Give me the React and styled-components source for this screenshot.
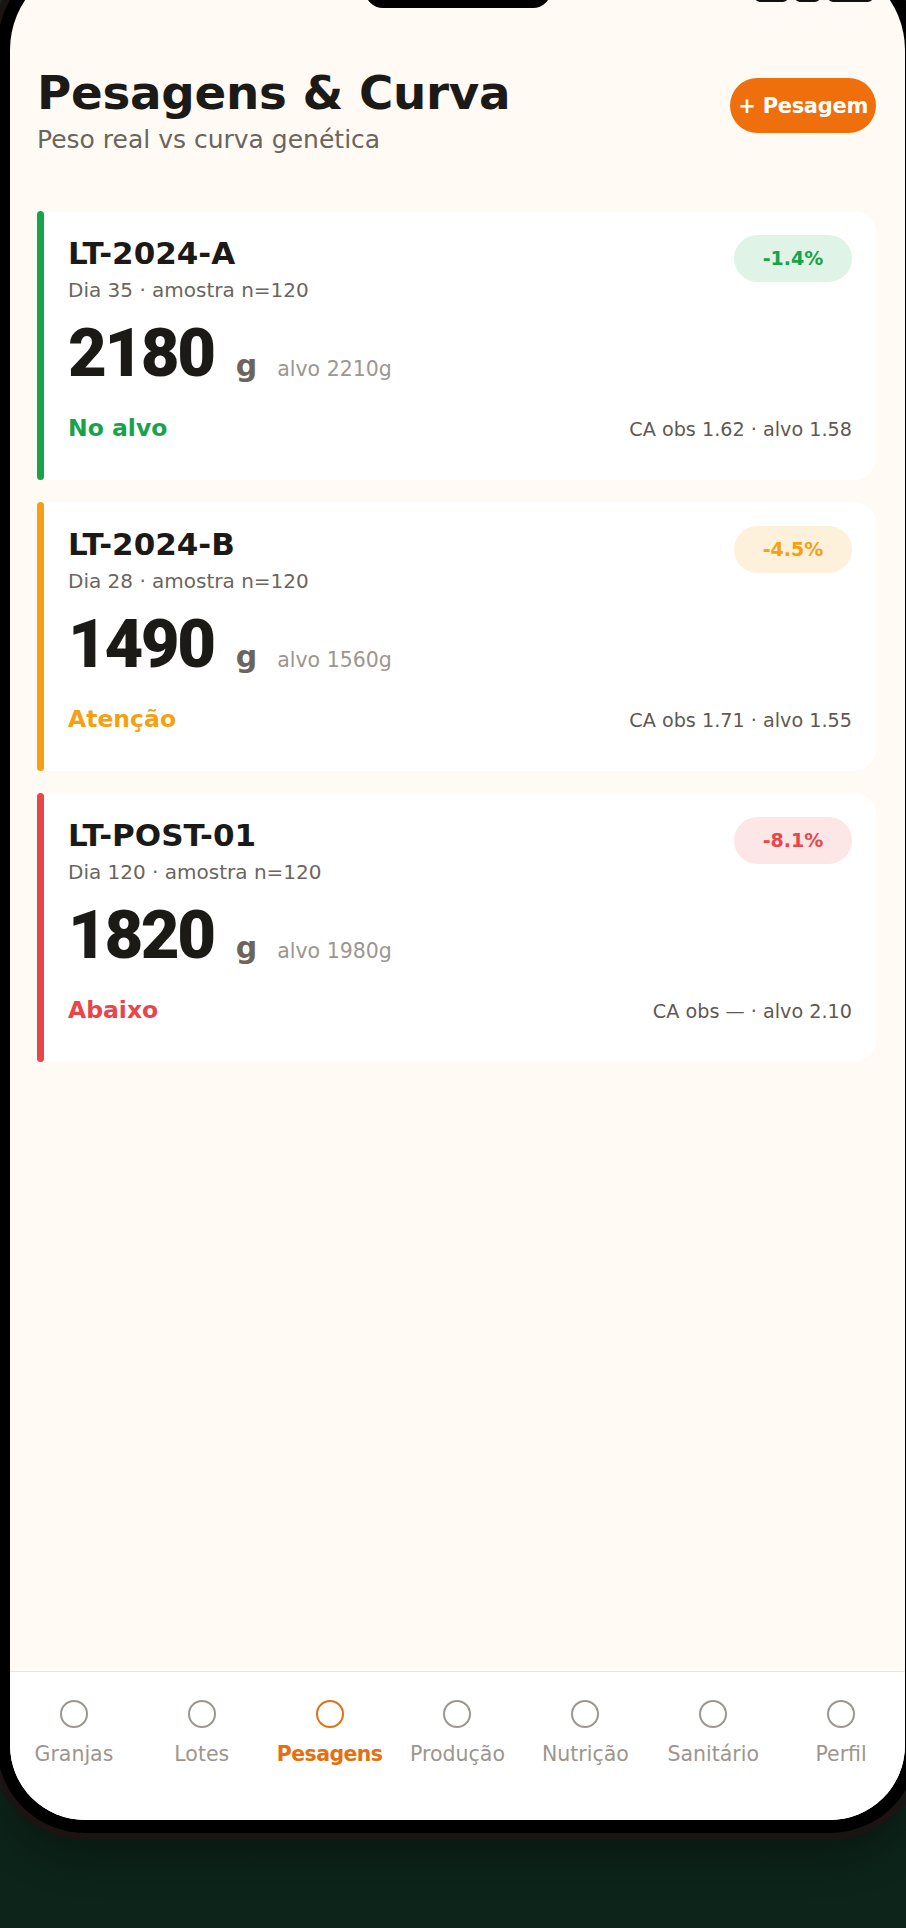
import React from "react"
import styled, { createGlobalStyle } from "styled-components"

const GlobalStyle = createGlobalStyle`
  html, body {
    margin: 0;
    height: 100%;
    overflow: hidden;
    background: linear-gradient(180deg, #10301f 0%, #0c2419 100%);
  }
  body {
    font-family: "DejaVu Sans", "Noto Sans", sans-serif;
    -webkit-font-smoothing: antialiased;
  }
`

const tones = {
  ok: { main: "#17a34a", soft: "#e0f3e7" },
  warn: { main: "#f4a012", soft: "#fdf1dc" },
  bad: { main: "#e8464b", soft: "#fde6e6" },
}

const Phone = styled.div`
  box-sizing: border-box;
  width: 921px;
  margin: -53px 0 0 -3px;
  border: 13px solid #000;
  border-radius: 103px 103px 88px 88px;
  background: #000;
  box-shadow: 0 0 0 7px #1a1513, 0 24px 40px rgba(0, 0, 0, 0.3);
`

const Screen = styled.div`
  position: relative;
  height: 1860px;
  display: flex;
  flex-direction: column;
  background: #fffbf4;
  border-radius: 90px 90px 75px 75px;
  overflow: hidden;
`

const Notch = styled.div`
  position: absolute;
  top: 12px;
  left: 50%;
  transform: translateX(-50%);
  width: 186px;
  height: 36px;
  border-radius: 18px;
  background: #000;
`

const StatusIcons = styled.div`
  position: absolute;
  top: 22px;
  right: 32px;
  display: flex;
  align-items: flex-end;
  gap: 7px;
`

const StatusIcon = styled.span`
  display: block;
  box-sizing: border-box;
  width: ${p => p.w}px;
  height: 20px;
  border-radius: 5px;
  background: ${p => (p.outline ? "transparent" : "#111")};
  border: ${p => (p.outline ? "2px solid #111" : "none")};
  margin-left: ${p => p.ml || 0}px;
`

const Main = styled.main`
  flex: 1;
  display: flex;
  flex-direction: column;
`

const Header = styled.header`
  display: flex;
  justify-content: space-between;
  align-items: flex-start;
  padding: 106px 29px 0 27px;
`

const Title = styled.h1`
  margin: 0;
  font-size: 46.8px;
  line-height: 54px;
  font-weight: 700;
  color: #1c1a17;
  letter-spacing: -0.3px;
`

const Subtitle = styled.p`
  margin: 5px 0 0;
  font-size: 25px;
  line-height: 30px;
  color: #6b655e;
`

const AddButton = styled.button`
  margin-top: 12px;
  height: 55px;
  padding: 0 8px;
  border: none;
  border-radius: 28px;
  background: #ee6f0b;
  color: #fff;
  font-family: inherit;
  font-size: 21px;
  font-weight: 700;
  letter-spacing: -0.3px;
`

const CardList = styled.section`
  display: flex;
  flex-direction: column;
  gap: 22px;
  padding: 55.5px 29px 0 27px;
`

const Card = styled.article`
  display: flex;
`

const Strip = styled.span`
  flex-shrink: 0;
  width: 7px;
  border-radius: 4px;
  background: ${p => tones[p.tone].main};
`

const CardBody = styled.div`
  flex: 1;
  background: #fff;
  border-radius: 4px 22px 22px 4px;
  padding: 24px 24px 37px 24px;
`

const TopRow = styled.div`
  display: flex;
  justify-content: space-between;
  align-items: flex-start;
`

const LotCode = styled.h2`
  margin: 0;
  font-size: 31px;
  line-height: 36px;
  font-weight: 700;
  color: #1c1a17;
`

const LotMeta = styled.p`
  margin: 6px 0 0;
  font-size: 20px;
  line-height: 26px;
  color: #6b655e;
`

const Badge = styled.span`
  display: inline-flex;
  align-items: center;
  justify-content: center;
  height: 47px;
  min-width: 118px;
  box-sizing: border-box;
  padding: 0 20px;
  border-radius: 24px;
  background: ${p => tones[p.tone].soft};
  color: ${p => tones[p.tone].main};
  font-size: 19px;
  font-weight: 700;
`

const WeightRow = styled.div`
  display: flex;
  align-items: baseline;
  margin-top: 15px;
`

const Weight = styled.span`
  font-family: Roboto, "Liberation Sans", sans-serif;
  font-size: 67px;
  line-height: 70px;
  font-weight: 900;
  letter-spacing: -2.4px;
  color: #1c1a17;
`

const Unit = styled.span`
  margin-left: 22px;
  font-size: 30px;
  font-weight: 700;
  color: #6b655e;
`

const Target = styled.span`
  margin-left: 20px;
  font-size: 20.5px;
  color: #9c968f;
`

const BottomRow = styled.div`
  display: flex;
  justify-content: space-between;
  align-items: baseline;
  margin-top: 25px;
`

const Status = styled.span`
  font-size: 23.5px;
  line-height: 30px;
  font-weight: 700;
  color: ${p => tones[p.tone].main};
`

const Conversion = styled.span`
  font-size: 19.2px;
  color: #5f5952;
`

const Nav = styled.nav`
  box-sizing: border-box;
  height: 149px;
  display: grid;
  grid-template-columns: repeat(7, 1fr);
  align-items: start;
  padding-top: 28px;
  background: #fff;
  border-top: 1px solid #ebe5dc;
`

const NavItem = styled.div`
  display: flex;
  flex-direction: column;
  align-items: center;
  color: ${p => (p.active ? "#e4700f" : "#9c968f")};
`

const NavDot = styled.span`
  box-sizing: border-box;
  width: 28px;
  height: 28px;
  border-radius: 50%;
  border: 2.5px solid currentColor;
`

const NavLabel = styled.span`
  margin-top: 13px;
  font-size: 20.5px;
  line-height: 26px;
  font-weight: ${p => (p.active ? 700 : 400)};
  letter-spacing: ${p => (p.active ? "-0.6px" : "0")};
  white-space: nowrap;
`

const lots = [
  { code: "LT-2024-A", day: 35, weight: 2180, target: 2210, status: "No alvo", tone: "ok", delta: "-1.4%", ca: "1.62", caTarget: "1.58" },
  { code: "LT-2024-B", day: 28, weight: 1490, target: 1560, status: "Atenção", tone: "warn", delta: "-4.5%", ca: "1.71", caTarget: "1.55" },
  { code: "LT-POST-01", day: 120, weight: 1820, target: 1980, status: "Abaixo", tone: "bad", delta: "-8.1%", ca: "—", caTarget: "2.10" },
]

const tabs = ["Granjas", "Lotes", "Pesagens", "Produção", "Nutrição", "Sanitário", "Perfil"]

const LotCard = ({ lot }) => (
  <Card>
    <Strip tone={lot.tone} />
    <CardBody>
      <TopRow>
        <div>
          <LotCode>{lot.code}</LotCode>
          <LotMeta>Dia {lot.day} · amostra n=120</LotMeta>
        </div>
        <Badge tone={lot.tone}>{lot.delta}</Badge>
      </TopRow>
      <WeightRow>
        <Weight>{lot.weight}</Weight>
        <Unit>g</Unit>
        <Target>alvo {lot.target}g</Target>
      </WeightRow>
      <BottomRow>
        <Status tone={lot.tone}>{lot.status}</Status>
        <Conversion>CA obs {lot.ca} · alvo {lot.caTarget}</Conversion>
      </BottomRow>
    </CardBody>
  </Card>
)

export default function App() {
  return (
    <>
      <GlobalStyle />
      <Phone>
        <Screen>
          <Notch />
          <StatusIcons>
            <StatusIcon w={33} />
            <StatusIcon w={25} />
            <StatusIcon w={45} outline ml={1} />
          </StatusIcons>
          <Main>
            <Header>
              <div>
                <Title>Pesagens &amp; Curva</Title>
                <Subtitle>Peso real vs curva genética</Subtitle>
              </div>
              <AddButton>+ Pesagem</AddButton>
            </Header>
            <CardList>
              {lots.map(lot => (
                <LotCard key={lot.code} lot={lot} />
              ))}
            </CardList>
          </Main>
          <Nav>
            {tabs.map(t => (
              <NavItem key={t} active={t === "Pesagens"}>
                <NavDot />
                <NavLabel active={t === "Pesagens"}>{t}</NavLabel>
              </NavItem>
            ))}
          </Nav>
        </Screen>
      </Phone>
    </>
  )
}
